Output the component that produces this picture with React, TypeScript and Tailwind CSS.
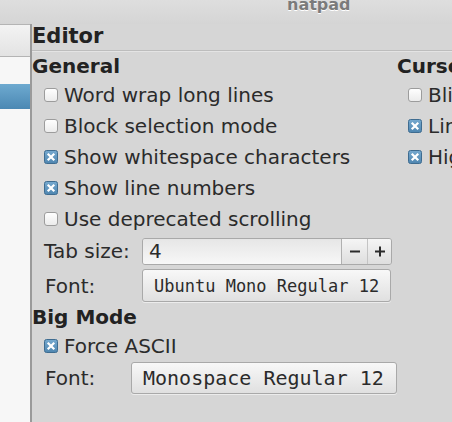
const sans = "font-['DejaVu_Sans',sans-serif]";
const mono = "font-['DejaVu_Sans_Mono',monospace]";

function Check({ on }: { on?: boolean }) {
  if (on) {
    return (
      <svg width="14" height="14" viewBox="0 0 14 14" className="shrink-0">
        <defs>
          <linearGradient id="cb-on" x1="0" y1="0" x2="0" y2="1">
            <stop offset="0" stopColor="#76a9cf" />
            <stop offset="1" stopColor="#4f86b0" />
          </linearGradient>
        </defs>
        <rect x="0.5" y="0.5" width="13" height="13" rx="2" fill="url(#cb-on)" stroke="#3f6c90" />
        <path d="M4.5 4.5 L9.5 9.5 M9.5 4.5 L4.5 9.5" stroke="#ffffff" strokeWidth="2.2" strokeLinecap="square" />
      </svg>
    );
  }
  return (
    <svg width="14" height="14" viewBox="0 0 14 14" className="shrink-0">
      <defs>
        <linearGradient id="cb-off" x1="0" y1="0" x2="0" y2="1">
          <stop offset="0" stopColor="#ffffff" />
          <stop offset="1" stopColor="#ebebeb" />
        </linearGradient>
      </defs>
      <rect x="0.5" y="0.5" width="13" height="13" rx="2.5" fill="url(#cb-off)" stroke="#9c9c9c" />
    </svg>
  );
}

function CheckRow({ label, on, h = 'h-[31px]' }: { label: string; on?: boolean; h?: string }) {
  return (
    <div className={`${h} flex items-center gap-[6px] whitespace-nowrap`}>
      <Check on={on} />
      <span>{label}</span>
    </div>
  );
}

function Heading({ children, h }: { children: string; h: string }) {
  return <div className={`${h} flex items-center font-bold text-[#222] whitespace-nowrap`}>{children}</div>;
}

export default function App() {
  return (
    <div className={`w-[452px] h-[422px] overflow-hidden flex flex-col bg-[#d6d6d6] text-[20px] leading-[24px] text-[#2b2b2b] ${sans}`}>
      {/* title bar */}
      <div className="h-[24px] shrink-0 bg-gradient-to-b from-[#dedede] to-[#d5d5d5] pl-[287px] overflow-hidden">
        <div className="-mt-[7px] text-[16px] leading-[24px] font-bold text-[#7b7b7b] [text-shadow:0_1px_0_#fff]">natpad</div>
      </div>

      <div className="flex flex-1 min-h-0">
        {/* sidebar list */}
        <div className="w-[32px] shrink-0 flex flex-col bg-[#f7f7f7] border-r-2 border-[#9a9a9a]">
          <div className="h-[33px] bg-gradient-to-b from-[#f3f3f3] to-[#e3e3e3] border-y border-[#b4b4b4]" />
          <div className="h-[27px]" />
          <div className="h-[25px] bg-gradient-to-b from-[#6eaad0] to-[#4b88b3]" />
        </div>

        <div className="flex-1 flex flex-col">
          <div className="h-[24px] font-bold text-[21px] text-[#222] flex items-center">Editor</div>
          <div className="mt-[2px] h-[1px] bg-[#bdbdbd]" />
          <div className="h-[1px] bg-[#e4e4e4]" />

          <div className="flex">
            {/* General */}
            <div className="w-[365px] shrink-0 flex flex-col">
              <Heading h="h-[27px]">General</Heading>
              <div className="pl-[12px] flex flex-col">
                <CheckRow label="Word wrap long lines" />
                <CheckRow label="Block selection mode" />
                <CheckRow label="Show whitespace characters" on />
                <CheckRow label="Show line numbers" on />
                <CheckRow label="Use deprecated scrolling" />
                <div className="h-[34px] flex items-center">
                  <span className="w-[98px]">Tab size:</span>
                  <div className="flex h-[27px] border border-[#a9a9a9] rounded-[3px] overflow-hidden">
                    <div className="w-[198px] pl-[6px] flex items-center bg-gradient-to-b from-[#e6e6e6] to-[#f7f7f7]">4</div>
                    <div className="w-[26px] flex items-center justify-center border-l border-[#b0b0b0] bg-gradient-to-b from-[#f5f5f5] to-[#dedede]">
                      <svg width="12" height="12" viewBox="0 0 12 12"><path d="M1 6.5 H11" stroke="#2b2b2b" strokeWidth="2" /></svg>
                    </div>
                    <div className="w-[24px] flex items-center justify-center border-l border-[#c4c4c4] bg-gradient-to-b from-[#f5f5f5] to-[#dedede]">
                      <svg width="12" height="12" viewBox="0 0 12 12"><path d="M1 6.5 H11 M6 1.5 V11.5" stroke="#2b2b2b" strokeWidth="2" /></svg>
                    </div>
                  </div>
                </div>
                <div className="h-[35px] flex items-center">
                  <span className="w-[98px] pl-[1px]">Font:</span>
                  <div className={`w-[249px] h-[33px] pl-[11px] flex items-center rounded-[3px] border border-[#a9a9a9] bg-gradient-to-b from-[#f8f8f8] to-[#e0e0e0] shadow-[0_1px_0_#ececec] text-[17px] whitespace-nowrap ${mono}`}>
                    Ubuntu Mono Regular 12
                  </div>
                </div>
              </div>
              <Heading h="h-[27px]">Big Mode</Heading>
              <div className="pl-[12px] flex flex-col">
                <CheckRow label="Force ASCII" on h="h-[32px]" />
                <div className="h-[32px] flex items-center">
                  <span className="w-[87px] pl-[1px]">Font:</span>
                  <div className={`w-[266px] h-[32px] pl-[11px] flex items-center rounded-[3px] border border-[#a9a9a9] bg-gradient-to-b from-[#f8f8f8] to-[#e0e0e0] shadow-[0_1px_0_#ececec] text-[20px] whitespace-nowrap ${mono}`}>
                    Monospace Regular 12
                  </div>
                </div>
              </div>
            </div>

            {/* Cursor */}
            <div className="flex-1 flex flex-col overflow-hidden">
              <Heading h="h-[27px]">Cursor</Heading>
              <div className="pl-[11px] flex flex-col">
                <CheckRow label="Blink cursor" />
                <CheckRow label="Line cursor" on />
                <CheckRow label="Highlight current line" on />
              </div>
            </div>
          </div>
        </div>
      </div>
    </div>
  );
}
